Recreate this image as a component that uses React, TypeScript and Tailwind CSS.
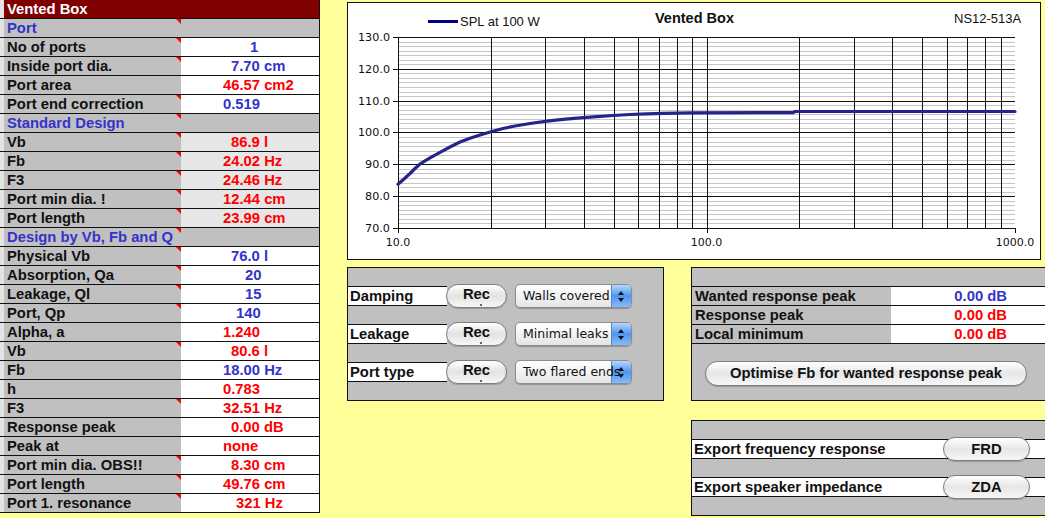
import React from "react";

type Row = {
  kind: "header" | "section" | "data";
  label: string;
  value?: string;
  color?: string;
  pl?: string;
  bg?: string;
  tri?: boolean;
};

const B = "text-[#3333cc]";
const R = "text-[#ff0000]";
const W = "bg-white";
const L = "bg-[#e6e6e6]";

const rows: Row[] = [
  { kind: "header", label: "Vented Box" },
  { kind: "section", label: "Port", tri: true },
  { kind: "data", label: "No of ports", value: "1", color: B, pl: "pl-[69px]", bg: W, tri: true },
  { kind: "data", label: "Inside port dia.", value: "7.70 cm", color: B, pl: "pl-[50px]", bg: W, tri: true },
  { kind: "data", label: "Port area", value: "46.57 cm2", color: R, pl: "pl-[42px]", bg: W },
  { kind: "data", label: "Port end correction", value: "0.519", color: B, pl: "pl-[42px]", bg: W, tri: true },
  { kind: "section", label: "Standard Design", tri: true },
  { kind: "data", label: "Vb", value: "86.9 l", color: R, pl: "pl-[50px]", bg: L, tri: true },
  { kind: "data", label: "Fb", value: "24.02 Hz", color: R, pl: "pl-[42px]", bg: L, tri: true },
  { kind: "data", label: "F3", value: "24.46 Hz", color: R, pl: "pl-[42px]", bg: L, tri: true },
  { kind: "data", label: "Port min dia. !", value: "12.44 cm", color: R, pl: "pl-[42px]", bg: L, tri: true },
  { kind: "data", label: "Port length", value: "23.99 cm", color: R, pl: "pl-[42px]", bg: L, tri: true },
  { kind: "section", label: "Design by Vb, Fb and Q", tri: true },
  { kind: "data", label: "Physical Vb", value: "76.0 l", color: B, pl: "pl-[50px]", bg: W, tri: true },
  { kind: "data", label: "Absorption, Qa", value: "20", color: B, pl: "pl-[64px]", bg: W, tri: true },
  { kind: "data", label: "Leakage, Ql", value: "15", color: B, pl: "pl-[64px]", bg: W, tri: true },
  { kind: "data", label: "Port, Qp", value: "140", color: B, pl: "pl-[55px]", bg: W, tri: true },
  { kind: "data", label: "Alpha, a", value: "1.240", color: R, pl: "pl-[42px]", bg: W },
  { kind: "data", label: "Vb", value: "80.6 l", color: R, pl: "pl-[50px]", bg: W, tri: true },
  { kind: "data", label: "Fb", value: "18.00 Hz", color: B, pl: "pl-[42px]", bg: W },
  { kind: "data", label: "h", value: "0.783", color: R, pl: "pl-[42px]", bg: W },
  { kind: "data", label: "F3", value: "32.51 Hz", color: R, pl: "pl-[42px]", bg: W, tri: true },
  { kind: "data", label: "Response peak", value: "0.00 dB", color: R, pl: "pl-[50px]", bg: W },
  { kind: "data", label: "Peak at", value: "none", color: R, pl: "pl-[42px]", bg: W },
  { kind: "data", label: "Port min dia. OBS!!", value: "8.30 cm", color: R, pl: "pl-[50px]", bg: W, tri: true },
  { kind: "data", label: "Port length", value: "49.76 cm", color: R, pl: "pl-[42px]", bg: W, tri: true },
  { kind: "data", label: "Port 1. resonance", value: "321 Hz", color: R, pl: "pl-[55px]", bg: W, tri: true },
];

function Tri() {
  return (
    <span className="absolute right-0 top-0 h-0 w-0 border-l-[5px] border-t-[5px] border-l-transparent border-t-[#ff0000]" />
  );
}

function LeftTable() {
  return (
    <div className="flex w-[320px] shrink-0 flex-col border-r border-[#111]">
      {rows.map((r, i) => {
        if (r.kind === "header") {
          return (
            <div key={i} className="flex h-[19px] border-b border-[#111]">
              <div className="w-[4px] bg-[#e4e4e4]" />
              <div className="flex-1 bg-[#800000] pl-[3px] text-[14.8px] font-bold leading-[18px] text-white">
                {r.label}
              </div>
            </div>
          );
        }
        if (r.kind === "section") {
          return (
            <div key={i} className="flex h-[19px] border-b border-[#111]">
              <div className="w-[4px] bg-[#e4e4e4]" />
              <div className="relative w-[177px] bg-[#c0c0c0] pl-[3px] text-[14.8px] font-bold leading-[18px] text-[#3333cc] whitespace-nowrap">
                {r.label}
                {r.tri && <Tri />}
              </div>
              <div className="flex-1 bg-[#c0c0c0]" />
            </div>
          );
        }
        return (
          <div key={i} className="flex h-[19px] border-b border-[#111]">
            <div className="w-[4px] bg-[#e4e4e4]" />
            <div className="relative w-[177px] bg-[#c0c0c0] pl-[3px] text-[14.8px] font-bold leading-[18px] text-[#111] whitespace-nowrap">
              {r.label}
              {r.tri && <Tri />}
            </div>
            <div className={`flex-1 ${r.bg} ${r.pl} ${r.color} text-[14.8px] font-bold leading-[18px] whitespace-nowrap`}>
              {r.value}
            </div>
          </div>
        );
      })}
    </div>
  );
}

function Chart() {
  const fx = (f: number) => 398 + 308.5 * Math.log10(f / 10);
  const fy = (db: number) => 37 + (130 - db) * 3.1833;
  const px = (v: number) => Math.round(v) + 0.5;

  const verts: number[] = [];
  for (const dec of [10, 100]) {
    for (let k = 2; k <= 10; k++) {
      if (dec === 100 && k === 10) continue;
      verts.push(fx(dec * k));
    }
  }
  const majors = [130, 120, 110, 100, 90, 80, 70];
  const minors: number[] = [];
  for (let i = 0; i < 6; i++) {
    for (let j = 1; j <= 6; j++) minors.push(fy(130 - i * 10 - (j * 10) / 7));
  }

  const pts: [number, number][] = [
    [398, 184.3], [404, 179], [410, 173.5], [415, 168.5], [420, 164], [425, 160.8], [430, 157.8],
    [440, 152.3], [450, 147], [460, 142], [470, 138.2], [480, 135], [491, 131.7], [503, 128.5],
    [515, 126], [530, 123.5], [547, 121.2], [563, 119.3], [580, 117.9], [597, 116.7], [613, 115.5],
    [630, 114.5], [647, 113.8], [663, 113.3], [690, 112.8], [793, 112.6], [795, 111.5], [1015, 111.5],
  ];

  const xlabels: [number, string][] = [
    [10, "10.0"],
    [100, "100.0"],
    [1000, "1000.0"],
  ];

  return (
    <div className="h-[258px] w-[694px] border border-[#111] bg-white">
      <svg width="692" height="256" viewBox="348 3 692 256" shapeRendering="crispEdges">
        {minors.map((y, i) => (
          <line key={"mi" + i} x1={398} x2={1015} y1={px(y)} y2={px(y)} stroke="#c6c6c6" strokeWidth={1} />
        ))}
        {verts.map((x, i) => (
          <line key={"v" + i} x1={px(x)} x2={px(x)} y1={37} y2={229} stroke="#111" strokeWidth={1} />
        ))}
        {majors.map((d, i) => (
          <line key={"ma" + i} x1={393} x2={1015} y1={px(fy(d))} y2={px(fy(d))} stroke="#111" strokeWidth={1} />
        ))}
        <line x1={398.5} x2={398.5} y1={37} y2={233} stroke="#111" strokeWidth={1} />
        <line x1={px(fx(100))} x2={px(fx(100))} y1={228} y2={233} stroke="#111" strokeWidth={1} />
        <line x1={1015.5} x2={1015.5} y1={228} y2={233} stroke="#111" strokeWidth={1} />

        <polyline
          points={pts.map((p) => p.join(",")).join(" ")}
          fill="none"
          stroke="#24248a"
          strokeWidth={3.2}
          strokeLinejoin="round"
          strokeLinecap="round"
          shapeRendering="geometricPrecision"
        />

        {majors.map((d, i) => (
          <text
            key={"yl" + i}
            x={390}
            y={fy(d) + 4}
            textAnchor="end"
            fontFamily="'DejaVu Sans', Verdana, sans-serif"
            fontSize={11.2}
            fill="#111"
          >
            {d.toFixed(1)}
          </text>
        ))}
        {xlabels.map(([f, t], i) => (
          <text
            key={"xl" + i}
            x={fx(f)}
            y={245.5}
            textAnchor="middle"
            fontFamily="'DejaVu Sans', Verdana, sans-serif"
            fontSize={11}
            fill="#111"
          >
            {t}
          </text>
        ))}

        <line x1={428} x2={458} y1={21} y2={21} stroke="#000080" strokeWidth={3} />
        <text x={460} y={25.5} fontFamily="'Liberation Sans', Arial, sans-serif" fontSize={13} fill="#111">
          SPL at 100 W
        </text>
        <text
          x={655}
          y={23}
          fontFamily="'Liberation Sans', Arial, sans-serif"
          fontSize={14.5}
          fontWeight="bold"
          fill="#111"
        >
          Vented Box
        </text>
        <text x={954} y={23} fontFamily="'Liberation Sans', Arial, sans-serif" fontSize={13} fill="#111">
          NS12-513A
        </text>
      </svg>
    </div>
  );
}

function AquaButton({ label, className }: { label: string; className: string }) {
  return (
    <div
      className={`flex items-center justify-center rounded-full border border-[#7d7d7d] bg-linear-to-b from-white via-[#e6e6e6] to-[#f7f7f7] shadow-[0_1px_1px_rgba(0,0,0,0.2)] text-[14.8px] font-bold text-[#111] ${className}`}
    >
      {label}
    </div>
  );
}

function RecButton() {
  return (
    <div className="relative ml-[-1px] h-[24px] w-[61px] shrink-0 rounded-full border border-[#7d7d7d] bg-linear-to-b from-white via-[#e3e3e3] to-[#f7f7f7] shadow-[0_1px_1px_rgba(0,0,0,0.2)] text-center text-[14.8px] font-bold leading-[19px] text-[#111]">
      Rec
      <span className="absolute bottom-[1px] left-[33px] h-[2px] w-[2px] rounded-full bg-[#333]" />
    </div>
  );
}

function Select({ text }: { text: string }) {
  return (
    <div className="relative ml-[8px] h-[24px] w-[117px] shrink-0 overflow-hidden rounded-[5px] border border-[#8d8d8d] bg-linear-to-b from-white via-[#f3f3f3] to-[#e4e4e4] shadow-[0_1px_1px_rgba(0,0,0,0.25)]">
      <div className="absolute right-0 top-0 h-full w-[20px] border-l border-[#5b84c4] bg-linear-to-b from-[#b4d7ff] via-[#4d95ef] to-[#86bcff]" />
      <span className="absolute left-[7px] top-0 whitespace-nowrap font-['DejaVu_Sans',Verdana,sans-serif] text-[12.5px] leading-[22px] text-[#111]">
        {text}
      </span>
      <svg className="absolute right-[7px] top-[6px]" width="6" height="11" viewBox="0 0 6 11">
        <path d="M0 4 L3 0 L6 4 Z" fill="#111" />
        <path d="M0 7 L3 11 L6 7 Z" fill="#111" />
      </svg>
    </div>
  );
}

function ControlRow({ label, sel }: { label: string; sel: string }) {
  return (
    <div className="flex h-[20px] items-center">
      <div className="h-[20px] w-[99px] shrink-0 border-y border-[#111] bg-white pl-[2px] text-[14.8px] font-bold leading-[18px] text-[#111]">
        {label}
      </div>
      <RecButton />
      <Select text={sel} />
    </div>
  );
}

function LeftPanel() {
  return (
    <div className="flex h-[134px] w-[317px] shrink-0 flex-col gap-[18px] border border-[#111] bg-[#c0c0c0] pt-[18px]">
      <ControlRow label="Damping" sel="Walls covered" />
      <ControlRow label="Leakage" sel="Minimal leaks" />
      <ControlRow label="Port type" sel="Two flared ends" />
    </div>
  );
}

function PeakRow({ label, value, color, last }: { label: string; value: string; color: string; last?: boolean }) {
  return (
    <div className={`flex ${last ? "h-[20px] border-b" : "h-[19px]"} border-t border-[#111]`}>
      <div className="w-[199px] shrink-0 bg-[#c0c0c0] pl-[3px] text-[14.8px] font-bold leading-[18px] text-[#111] whitespace-nowrap">
        {label}
      </div>
      <div className={`flex-1 bg-white pr-[38px] text-right text-[14.8px] font-bold leading-[18px] ${color}`}>
        {value}
      </div>
    </div>
  );
}

function RightPanel1() {
  return (
    <div className="flex h-[134px] w-[354px] flex-col border-y border-l border-[#111] bg-[#c0c0c0] pt-[18px]">
      <PeakRow label="Wanted response peak" value="0.00 dB" color="text-[#3333cc]" />
      <PeakRow label="Response peak" value="0.00 dB" color="text-[#ff0000]" />
      <PeakRow label="Local minimum" value="0.00 dB" color="text-[#ff0000]" last />
      <AquaButton label="Optimise Fb for wanted response peak" className="ml-[13px] mt-[17px] h-[25px] w-[322px]" />
    </div>
  );
}

function ExportRow({ label, btn }: { label: string; btn: string }) {
  return (
    <div className="flex h-[20px] items-center border-y border-[#111] bg-white">
      <div className="w-[251px] shrink-0 pl-[2px] text-[14.8px] font-bold leading-[18px] text-[#111] whitespace-nowrap">
        {label}
      </div>
      <AquaButton label={btn} className="h-[24px] w-[87px] shrink-0" />
    </div>
  );
}

function RightPanel2() {
  return (
    <div className="mt-[19px] flex h-[96px] w-[354px] flex-col gap-[18px] border-y border-l border-[#111] bg-[#c0c0c0] pt-[18px]">
      <ExportRow label="Export frequency response" btn="FRD" />
      <ExportRow label="Export speaker impedance" btn="ZDA" />
    </div>
  );
}

export default function App() {
  return (
    <div className="flex h-[518px] w-[1045px] overflow-hidden bg-[#ffff99] font-['Liberation_Sans',Arial,Helvetica,sans-serif]">
      <div className="self-start">
        <LeftTable />
      </div>
      <div className="ml-[27px] flex flex-col pt-[2px]">
        <Chart />
        <div className="mt-[7px] flex">
          <LeftPanel />
          <div className="ml-[27px] flex flex-col">
            <RightPanel1 />
            <RightPanel2 />
          </div>
        </div>
      </div>
    </div>
  );
}
